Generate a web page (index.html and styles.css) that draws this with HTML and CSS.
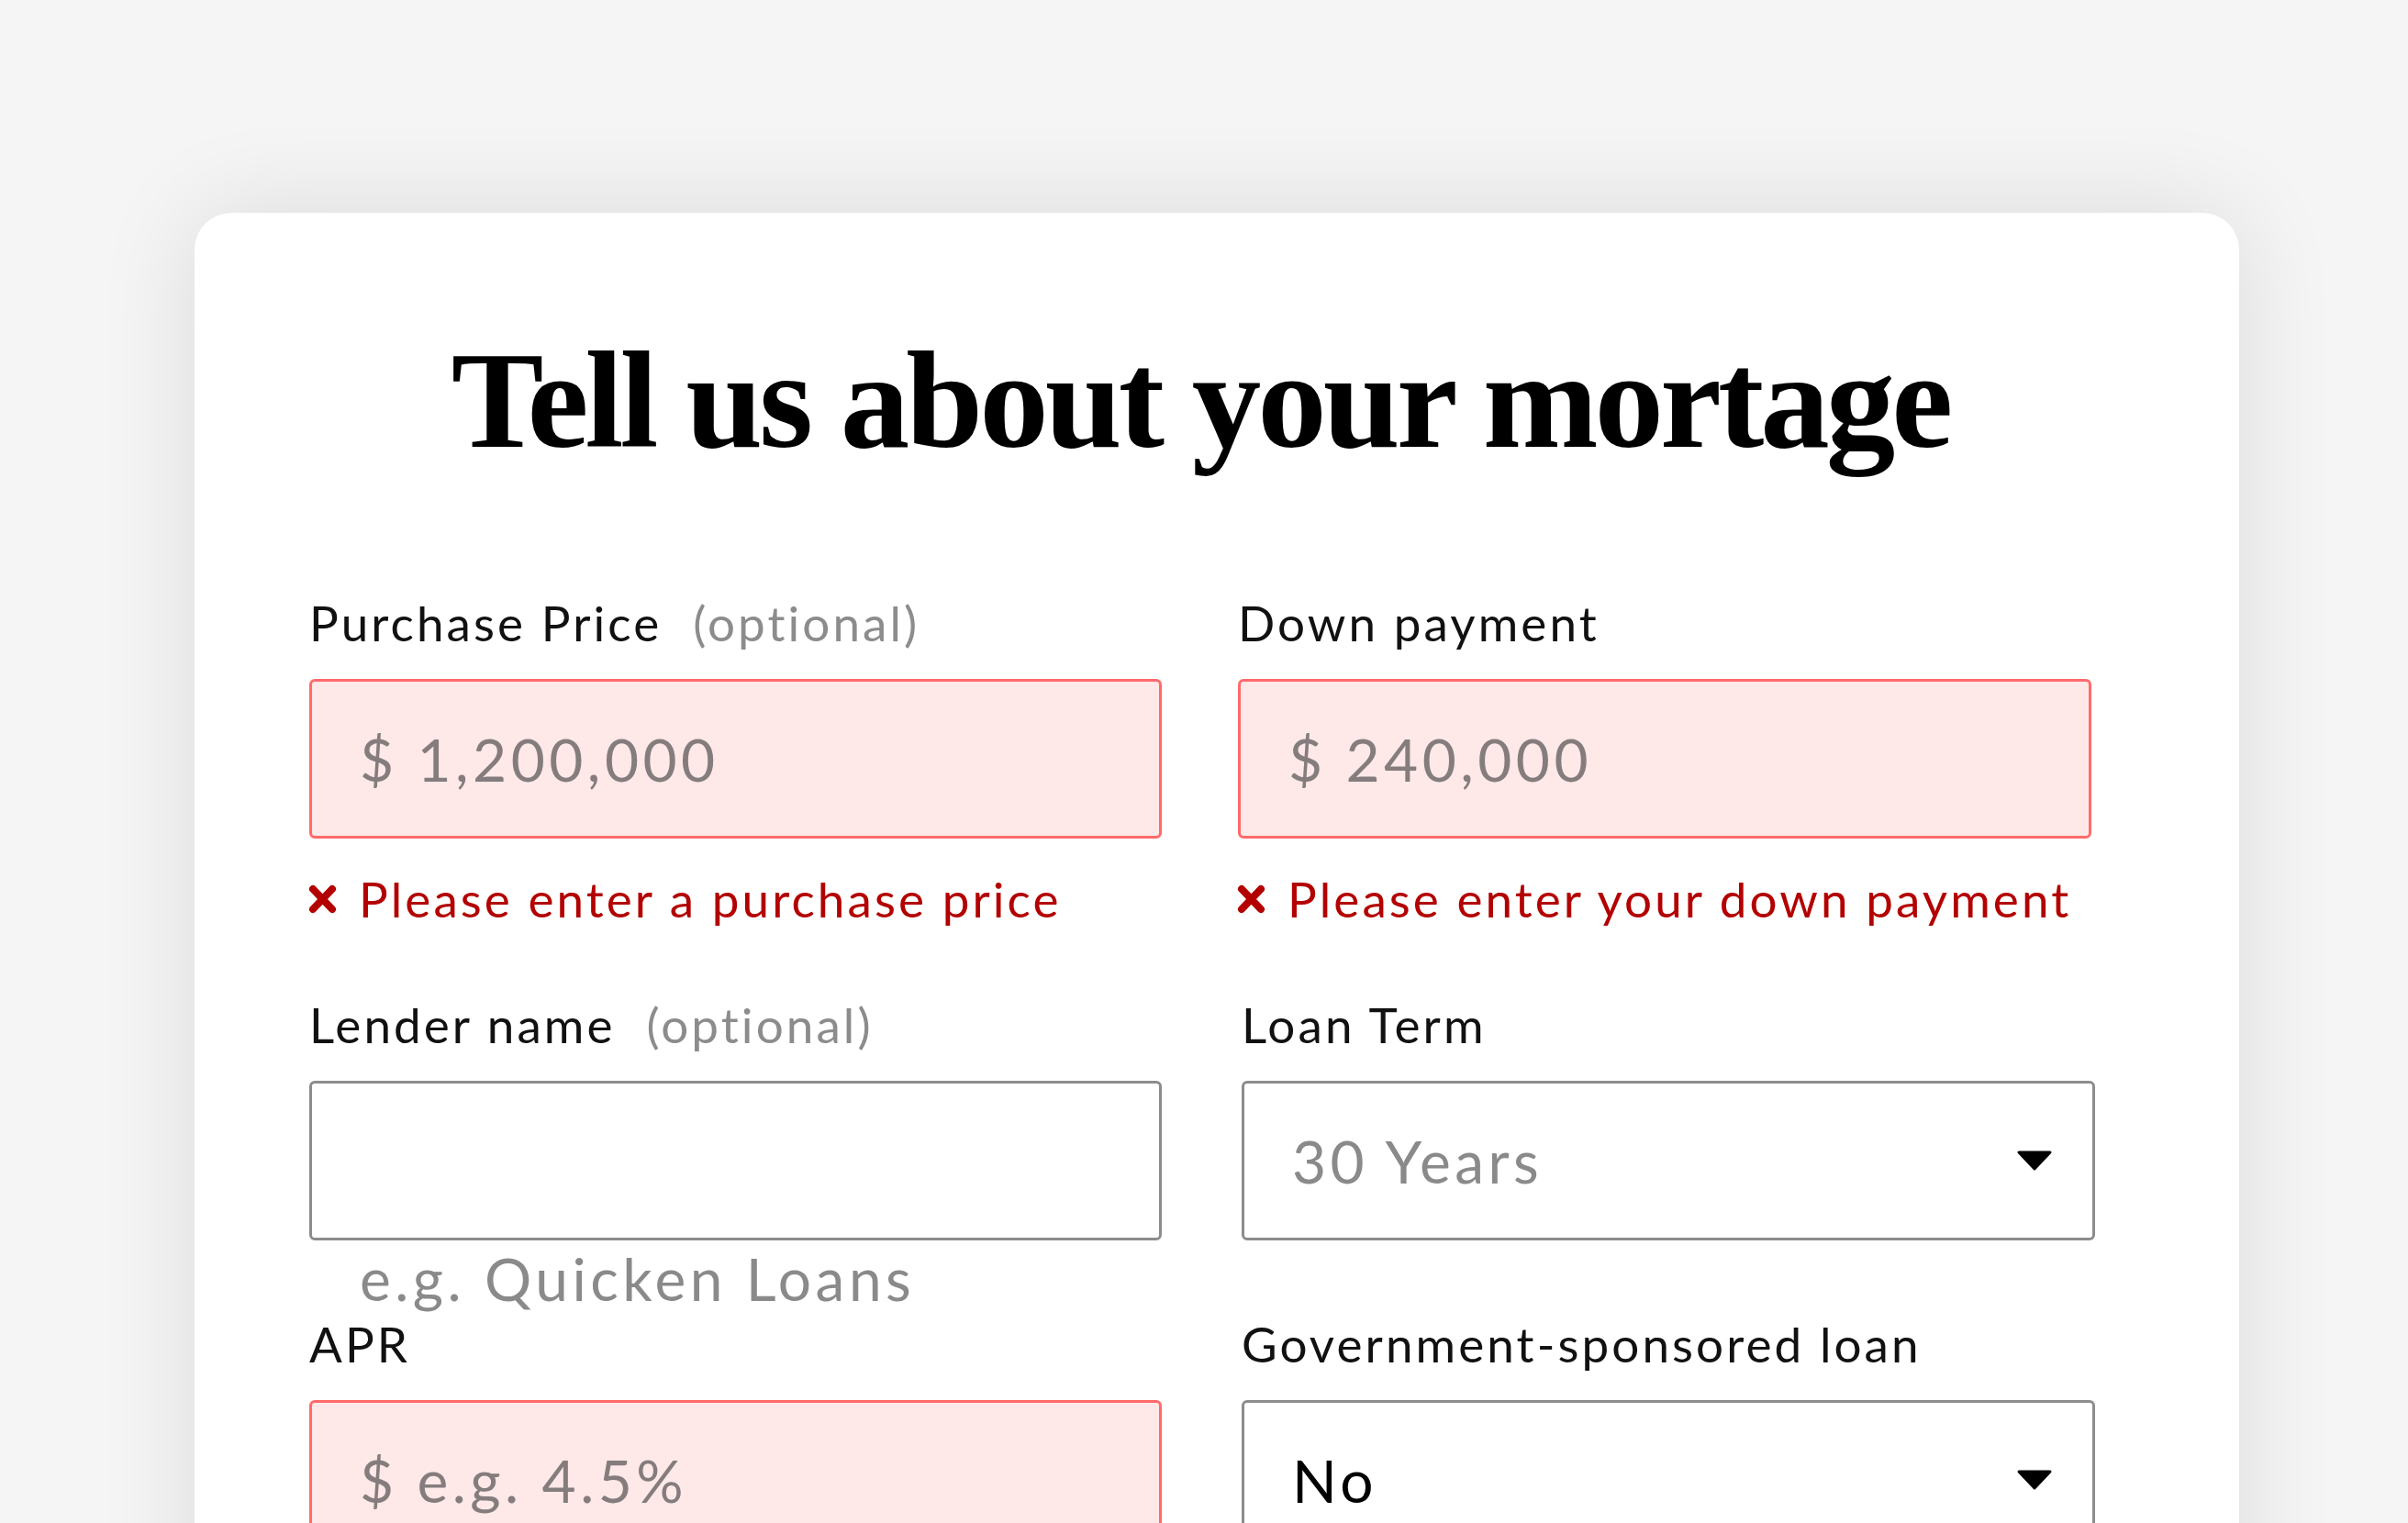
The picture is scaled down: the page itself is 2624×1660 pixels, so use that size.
FILE: index.html
```html
<!DOCTYPE html>
<html lang="en">
<head>
<meta charset="utf-8">
<title>Tell us about your mortage</title>
<link rel="stylesheet" href="styles.css">
</head>
<body>
<main class="page">
  <section class="card">
    <h1 class="title">Tell us about your mortage</h1>
    <div class="form-grid">
      <div class="field">
        <div class="label">Purchase Price<span class="opt">(optional)</span></div>
        <div class="box invalid">$ 1,200,000</div>
        <div class="err">
          <svg class="err-icon" width="31" height="32" viewBox="0 0 31 32"><path d="M5 5L26 27M26 5L5 27" stroke="#b30000" stroke-width="8" stroke-linecap="round" fill="none"/></svg>
          <span>Please enter a purchase price</span>
        </div>
      </div>
      <div class="field">
        <div class="label">Down payment</div>
        <div class="box invalid">$ 240,000</div>
        <div class="err">
          <svg class="err-icon" width="31" height="32" viewBox="0 0 31 32"><path d="M5 5L26 27M26 5L5 27" stroke="#b30000" stroke-width="8" stroke-linecap="round" fill="none"/></svg>
          <span>Please enter your down payment</span>
        </div>
      </div>
      <div class="field">
        <div class="label">Lender name<span class="opt">(optional)</span></div>
        <div class="box"></div>
        <div class="helper">e.g. Quicken Loans</div>
      </div>
      <div class="field shift">
        <div class="label">Loan Term</div>
        <div class="box select"><span>30 Years</span>
          <svg class="caret" width="40" height="24" viewBox="0 0 40 24"><path d="M3 3H37L20 21Z" fill="#000" stroke="#000" stroke-width="3" stroke-linejoin="round"/></svg>
        </div>
      </div>
      <div class="field">
        <div class="label">APR</div>
        <div class="box invalid">$ e.g. 4.5%</div>
      </div>
      <div class="field shift">
        <div class="label">Government-sponsored loan</div>
        <div class="box select dark"><span>No</span>
          <svg class="caret" width="40" height="24" viewBox="0 0 40 24"><path d="M3 3H37L20 21Z" fill="#000" stroke="#000" stroke-width="3" stroke-linejoin="round"/></svg>
        </div>
      </div>
    </div>
  </section>
</main>
</body>
</html>
```
FILE: styles.css
```css
html, body {
  margin: 0;
  padding: 0;
  background: #f5f5f5;
}

body {
  width: 2624px;
  height: 1660px;
  overflow: hidden;
  font-family: Lato, "Liberation Sans", sans-serif;
  color: #111;
}

.page {
  padding: 232px 0 0 212px;
}

.card {
  box-sizing: border-box;
  width: 2228px;
  min-height: 1600px;
  padding: 129px 161px 0 125px;
  background: #fff;
  border-radius: 40px;
  box-shadow: 0 0 110px rgba(0, 0, 0, 0.11);
}

.title {
  margin: 0 0 135px;
  font-family: "Liberation Serif", "Times New Roman", serif;
  font-weight: 700;
  font-size: 151px;
  line-height: 151px;
  letter-spacing: -4px;
  text-align: center;
  color: #000;
}

.form-grid {
  display: grid;
  grid-template-columns: 929px 930px;
  column-gap: 83px;
}

.field.shift {
  margin-left: 4px;
  margin-right: -4px;
}

.label {
  margin-bottom: 29px;
  font-size: 53px;
  line-height: 64px;
  letter-spacing: 0.058em;
  white-space: nowrap;
  color: #111;
}

.opt {
  margin-left: 34px;
  color: #8c8c8c;
}

.box {
  box-sizing: border-box;
  height: 174px;
  display: flex;
  align-items: center;
  justify-content: space-between;
  padding: 0 43px 0 52px;
  border: 3px solid #8c8c8e;
  border-radius: 6px;
  background: #fff;
  font-size: 64px;
  letter-spacing: 0.07em;
  color: #8a8a8a;
  white-space: nowrap;
}

.box.invalid {
  border-color: #ff6b6b;
  background: #ffe8e8;
  color: #857d7d;
}

.box.dark {
  color: #000;
}

.caret {
  display: block;
  flex: none;
}

.err {
  display: flex;
  align-items: center;
  gap: 24px;
  margin: 34px 0 73px -1px;
  font-size: 53px;
  line-height: 64px;
  letter-spacing: 0.058em;
  color: #b30000;
  white-space: nowrap;
}

.err-icon {
  display: block;
  flex: none;
}

.helper {
  margin: 4px 0 1px;
  padding-left: 55px;
  font-size: 64px;
  line-height: 76px;
  letter-spacing: 0.07em;
  color: #8a8a8a;
  white-space: nowrap;
}
```
